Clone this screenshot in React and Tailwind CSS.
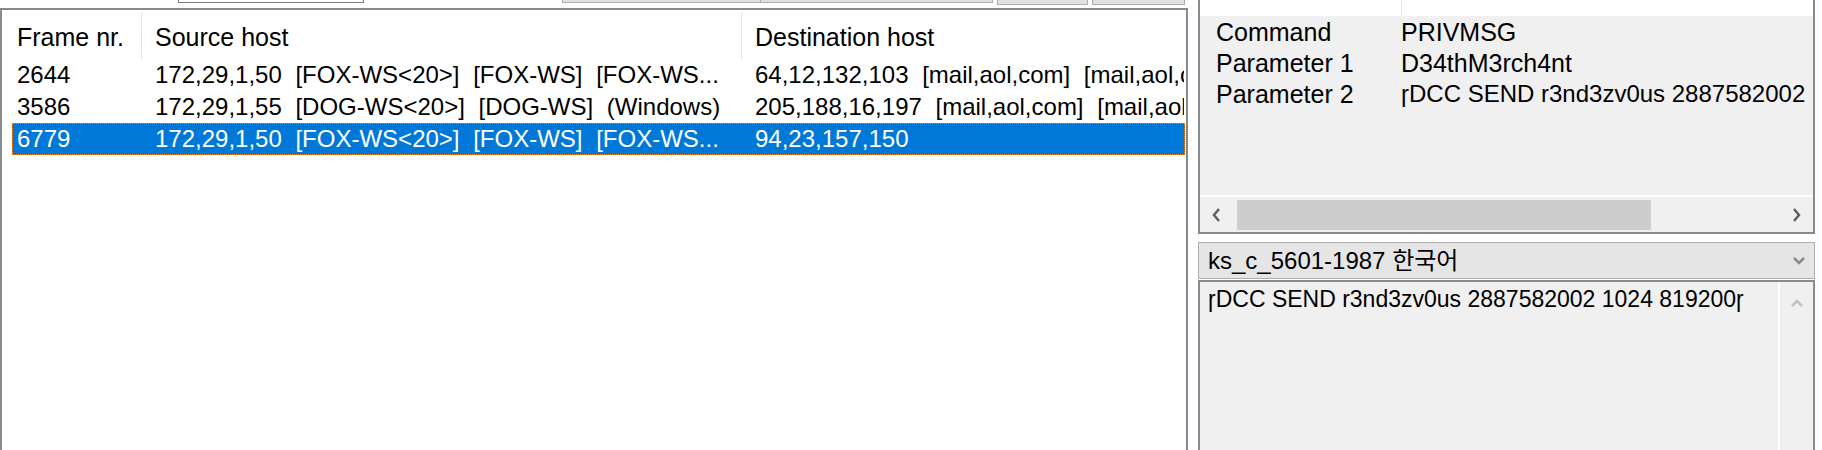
import React from "react";

const font = "font-['Liberation_Sans','Noto_Sans_CJK_KR',sans-serif]";

const rows = [
  { nr: "2644", src: "172,29,1,50 [FOX-WS<20>] [FOX-WS] [FOX-WS...", dst: "64,12,132,103 [mail,aol,com] [mail,aol,com]" },
  { nr: "3586", src: "172,29,1,55 [DOG-WS<20>] [DOG-WS] (Windows)", dst: "205,188,16,197 [mail,aol,com] [mail,aol,com]" },
  { nr: "6779", src: "172,29,1,50 [FOX-WS<20>] [FOX-WS] [FOX-WS...", dst: "94,23,157,150", selected: true },
];

const props = [
  ["Command", "PRIVMSG", "text-[25px]"],
  ["Parameter 1", "D34thM3rch4nt", "text-[25px]"],
  ["Parameter 2", "ɼDCC SEND r3nd3zv0us 2887582002 1024 819200ɼ", "text-[24px]"],
];

function Chevron({ dir, className }) {
  const pts = {
    left: "9,2 4,8 9,14",
    right: "5,2 10,8 5,14",
    down: "2,5 7,10 12,5",
    up: "2,10 7,5 12,10",
  }[dir];
  return (
    <svg width="14" height="16" viewBox="0 0 14 16" className={className}>
      <polyline points={pts} fill="none" stroke="currentColor" strokeWidth="2.5" />
    </svg>
  );
}

export default function App() {
  return (
    <div className={`w-[1822px] h-[450px] bg-white flex overflow-hidden text-[24px] leading-[28px] text-black ${font}`}>
      {/* left: frame list */}
      <div className="w-[1188px] flex flex-col shrink-0">
        {/* bottoms of toolbar controls cut off above */}
        <div className="h-[8px] flex items-start shrink-0">
          <div className="ml-[178px] w-[186px] h-[3px] border-x border-b border-[#7a7a7a] bg-white" />
          <div className="ml-[198px] w-[199px] h-[3px] border-x border-b border-[#adadad] bg-[#e1e1e1]" />
          <div className="w-[232px] h-[3px] border-r border-b border-[#adadad] bg-[#e1e1e1]" />
          <div className="ml-[4px] w-[91px] h-[5px] border-x border-b border-[#adadad] bg-[#e1e1e1]" />
          <div className="ml-[4px] w-[93px] h-[5px] border-x border-b border-[#adadad] bg-[#e1e1e1]" />
        </div>
        <div className="flex-1 border-2 border-b-0 border-[#868a91] flex flex-col overflow-hidden">
          {/* header */}
          <div className="h-[49px] flex shrink-0 whitespace-nowrap text-[25px]">
            <div className="w-[139px] pl-[15px] pt-[4px] flex items-center">Frame nr.</div>
            <div className="w-px mt-[2px] h-[48px] bg-[#e5e5e5]" />
            <div className="w-[599px] pl-[13px] pt-[4px] flex items-center">Source host</div>
            <div className="w-px mt-[2px] h-[48px] bg-[#e5e5e5]" />
            <div className="flex-1 pl-[13px] pt-[4px] flex items-center">Destination host</div>
          </div>
          {/* rows */}
          {rows.map((r) => (
            <div
              key={r.nr}
              className={`h-[32px] ml-[10px] mr-[1px] flex items-center whitespace-nowrap overflow-hidden [word-spacing:7px] ${
                r.selected ? "bg-[#0078d7] text-white border border-dotted border-[#f7882a]" : "border border-transparent"
              }`}
            >
              <div className="w-[128px] pl-[4px] shrink-0">{r.nr}</div>
              <div className="w-[600px] pl-[14px] shrink-0 overflow-hidden">{r.src}</div>
              <div className="pl-[14px] shrink-0">{r.dst}</div>
            </div>
          ))}
        </div>
      </div>

      {/* right: details */}
      <div className="ml-[10px] w-[617px] flex flex-col shrink-0">
        {/* property list */}
        <div className="h-[234px] border-2 border-t-0 border-[#868a91] flex flex-col shrink-0">
          <div className="h-[16px] bg-white flex shrink-0">
            <div className="w-[202px] border-r border-[#e5e5e5]" />
          </div>
          <div className="flex-1 bg-[#f0f0f0] overflow-hidden">
            {props.map(([k, v, size]) => (
              <div key={k} className="h-[31px] flex items-center whitespace-nowrap">
                <div className="w-[201px] pl-[16px] shrink-0 text-[25px]">{k}</div>
                <div className={`shrink-0 ${size}`}>{v}</div>
              </div>
            ))}
          </div>
          <div className="h-[2px] bg-white shrink-0" />
          <div className="h-[35px] bg-[#f0f0f0] flex items-center shrink-0">
            <div className="w-[34px] h-full flex items-center justify-center text-[#606060]">
              <Chevron dir="left" />
            </div>
            <div className="ml-[3px] w-[414px] h-[30px] bg-[#cdcdcd]" />
            <div className="flex-1" />
            <div className="w-[34px] h-full flex items-center justify-center text-[#606060]">
              <Chevron dir="right" />
            </div>
          </div>
        </div>

        {/* encoding select */}
        <div className="mt-[8px] h-[37px] border border-[#adadad] bg-[#e5e5e5] flex items-center pl-[9px] pr-[8px] shrink-0">
          <span className="flex-1 whitespace-nowrap">ks_c_5601-1987 한국어</span>
          <Chevron dir="down" className="text-[#8a8a8a]" />
        </div>

        {/* text box */}
        <div className="mt-[1px] flex-1 border-2 border-b-0 border-[#868a91] bg-[#f0f0f0] flex">
          <div className="flex-1 pl-[8px] pt-[2px] h-[32px] flex items-center whitespace-nowrap text-[23px]">
            ɼDCC SEND r3nd3zv0us 2887582002 1024 819200ɼ
          </div>
          <div className="w-[2px] bg-white" />
          <div className="w-[33px] flex justify-center pt-[14px] text-[#c2c2c2]">
            <Chevron dir="up" />
          </div>
        </div>
      </div>
    </div>
  );
}
